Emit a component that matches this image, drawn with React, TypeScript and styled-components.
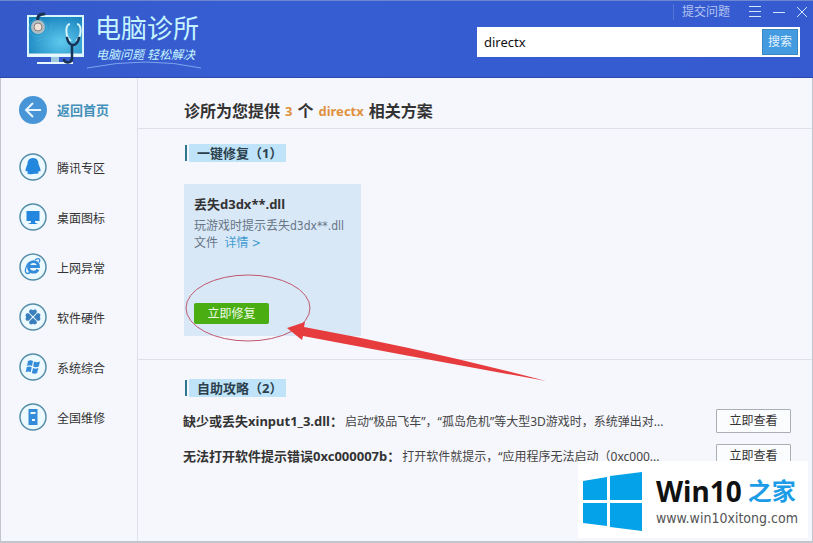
import React from "react";
import styled, { createGlobalStyle } from "styled-components";

const GlobalStyle = createGlobalStyle`
  * { box-sizing: border-box; }
  body {
    margin: 0;
    background: #f6f7fd;
    color: #333;
    font: 12px/16px "Noto Sans", "Noto Sans CJK SC", sans-serif;
  }
  button, input { font: inherit; }
  button { cursor: pointer; }
  h1, h2, h3, p, ul { margin: 0; padding: 0; }
  ul { list-style: none; }
  svg { flex-shrink: 0; }
`;

const Window = styled.div`
  position: relative;
  display: flex;
  flex-direction: column;
  min-height: 100vh;
  border: 1px solid #c3c5cd;
  border-top: 0;
  border-bottom-width: 2px;
`;

const Header = styled.header`
  display: flex;
  justify-content: space-between;
  height: 78px;
  margin: 0 -1px;
  background: linear-gradient(90deg, #3559c9, #365dd2 30%, #365bd1);
  border-top: 1px solid #6d87cf;
  border-bottom: 1px solid #2c4aa5;
`;

const Brand = styled.div`
  display: flex;
  gap: 8px;
  padding: 10px 0 0 26px;
`;

const BrandText = styled.div`
  color: #c5f4ff;
`;

const BrandName = styled.div`
  font-size: 26px;
  line-height: 32px;
  padding: 1px 0 0 1px;
  white-space: nowrap;
`;

const Slogan = styled.div`
  padding: 4px 0 0 2px;
  font-size: 12px;
  line-height: 14px;
  font-style: italic;
  white-space: nowrap;
`;

const Swoosh = styled.svg`
  display: block;
  margin: -1px 0 0 -7px;
`;

const Tools = styled.div`
  display: flex;
  flex: 0 1 336px;
  flex-direction: column;
  gap: 4px;
  padding-right: 13px;
`;

const WindowControls = styled.nav`
  display: flex;
  align-items: center;
  justify-content: flex-end;
  gap: 10px;
  height: 22px;
  margin-right: -8px;
`;

const Feedback = styled.a`
  margin-right: 8px;
  padding-left: 8px;
  border-left: 1px solid #5674d6;
  color: #b3c3f0;
  text-decoration: none;
`;

const ControlButton = styled.button`
  display: flex;
  padding: 0;
  border: 0;
  background: none;
`;

const SearchForm = styled.form`
  display: flex;
  height: 30px;
  padding: 2px;
  background: #fff;
`;

const SearchInput = styled.input`
  flex: 1;
  min-width: 0;
  padding: 0 5px;
  border: 0;
  outline: 0;
  background: none;
  color: #111;
  font-size: 13px;
`;

const SearchButton = styled.button`
  width: 36px;
  padding: 0;
  border: 1px solid #3b86c0;
  background: #449be0;
  color: #e2f3ff;
`;

const Body = styled.div`
  display: flex;
  flex: 1;
`;

const Sidebar = styled.nav`
  flex: 0 0 137px;
  padding: 18px 0 0 18px;
  border-right: 1px solid #dfe1e8;
`;

const NavLink = styled.a<{ $home?: boolean }>`
  display: flex;
  align-items: center;
  gap: 10px;
  height: 28px;
  margin-bottom: ${(p) => (p.$home ? 29 : 22)}px;
  color: ${(p) => (p.$home ? "#4290b8" : "#333")};
  font-size: ${(p) => (p.$home ? 13 : 12)}px;
  font-weight: ${(p) => (p.$home ? 700 : 400)};
  text-decoration: none;
`;

const NavText = styled.span`
  padding-top: 3px;
`;

const Main = styled.main`
  flex: 1;
  min-width: 0;
`;

const Title = styled.h1`
  display: flex;
  align-items: center;
  gap: 5px;
  height: 51px;
  padding: 16px 0 0 46px;
  line-height: 20px;
  font-size: 16px;
  border-bottom: 1px solid #dfe1e8;
  white-space: nowrap;
`;

const Accent = styled.span`
  color: #e0913c;
  font-size: 13px;
`;

const Section = styled.section<{ $divided?: boolean }>`
  padding: ${(p) => (p.$divided ? "15px 21px 23px 46px" : "19px 21px 23px 46px")};
  border-bottom: ${(p) => (p.$divided ? "1px solid #dfe1e8" : "0")};
`;

const SectionTitle = styled.h2`
  display: flex;
  gap: 2px;
  width: max-content;
  margin-left: 1px;
  font-size: 13px;
  line-height: 18px;
  color: #2b3f4d;

  &::before {
    content: "";
    width: 2px;
    margin: 1px 0;
    background: #2c7890;
  }
`;

const SectionLabel = styled.span`
  padding: 0 4px 0 8px;
  background: #bfe4f9;
`;

const Card = styled.article`
  position: relative;
  display: flex;
  flex-direction: column;
  align-items: flex-start;
  width: 177px;
  height: 152px;
  margin-top: 22px;
  padding: 10px 10px 12px;
  background: #d9e8f7;
`;

const CardTitle = styled.h3`
  font-size: 13px;
  line-height: 20px;
`;

const CardText = styled.p`
  margin-top: 4px;
  color: #667585;
  font-family: "DejaVu Sans Condensed", "Noto Sans CJK SC", sans-serif;
  line-height: 17px;
`;

const DetailLink = styled.a`
  margin-left: 3px;
  color: #419bd0;
  text-decoration: none;
`;

const FixButton = styled.button`
  width: 75px;
  height: 21px;
  margin-top: auto;
  padding: 0;
  border: 0;
  border-radius: 2px;
  background: #4aad12;
  color: #effbe6;
`;

const Annotation = styled.svg`
  position: absolute;
  left: 0;
  top: 88px;
  z-index: 1;
  pointer-events: none;
`;

const Guides = styled.ul`
  display: grid;
  gap: 11px;
  margin: 12px 0 0 -1px;
`;

const Guide = styled.li`
  display: flex;
  align-items: center;
  gap: 2px;
  height: 24px;
  white-space: nowrap;
`;

const GuideName = styled.h3`
  font-size: 13px;
  line-height: 18px;
`;

const GuideText = styled.p`
  flex: 1;
  padding-top: 1px;
  color: #444;
`;

const ViewButton = styled.button`
  flex: 0 0 75px;
  height: 24px;
  padding: 0;
  border: 1px solid #aaaeb5;
  border-radius: 1px;
  background: #fbfcfe;
  color: #333;
`;

const Watermark = styled.aside`
  position: absolute;
  right: 4px;
  bottom: 3px;
  z-index: 2;
  display: flex;
  gap: 13px;
  width: 230px;
  height: 77px;
  padding: 11px 0 0 5px;
  background: #fff;
`;

const SiteName = styled.div`
  display: flex;
  gap: 6px;
  padding-top: 3px;
  color: #111;
  font-size: 28px;
  font-weight: 700;
  line-height: 32px;
  white-space: nowrap;
`;

const SiteSuffix = styled.span`
  color: #1c9ce6;
  font-size: 24px;
`;

const SiteUrl = styled.div`
  padding-top: 2px;
  color: #555;
  font-family: "DejaVu Sans Condensed", "Noto Sans", sans-serif;
  font-size: 14px;
  line-height: 18px;
`;

const blue = "#338bd9";

const LogoIcon = () => (
  <svg width="60" height="56" viewBox="0 0 60 56" fill="none" aria-hidden="true">
    <defs>
      <radialGradient id="screen" cx="0.6" cy="0.65" r="0.7">
        <stop offset="0" stopColor="#5fc9ee" />
        <stop offset="1" stopColor="#1783bd" />
      </radialGradient>
    </defs>
    <path d="M25 45h8v6h-8z" fill="#9dc8de" />
    <path d="M11 51h36v2H11z" fill="#e8f6fd" />
    <rect x="2" y="5" width="55" height="40" fill="url(#screen)" stroke="#d8f5fe" strokeWidth="2" />
    <path d="M3 44h53" stroke="#e8f6fd" strokeWidth="3" />
    <g stroke="#4db3dc" strokeOpacity="0.5">
      <circle cx="12" cy="17" r="9" />
      <path d="M25 12q2 14-14 18" />
    </g>
    <path d="M12 12c-1-6 0-9 6-9" stroke="#173254" strokeWidth="3" strokeLinecap="round" />
    <circle cx="12" cy="16" r="7" fill="#b1bdc3" />
    <circle cx="12" cy="16" r="4" fill="#eee1d8" stroke="#8a817c" />
    <path d="M44 13c-5 0-5 13 1 17m6-17c5 0 5 13-1 17" stroke="#d4f3fb" strokeWidth="2" />
    <path d="M41 27c1 4 3 7 6 7s5-3 6-7M46 35v12c0 5-6 6-8 2" stroke="#173254" strokeWidth="2.5" strokeLinecap="round" />
  </svg>
);

const BackIcon = () => (
  <svg width="28" height="28" viewBox="0 0 28 28" fill="none" aria-hidden="true">
    <circle cx="14" cy="14" r="14" fill="#4795d7" />
    <path d="M14 7l-7 7 7 7M7 14h15" stroke="#e8f7ff" strokeWidth="2" />
  </svg>
);

const Ring = ({ children }: { children: React.ReactNode }) => (
  <svg width="28" height="28" viewBox="0 0 28 28" fill="none" aria-hidden="true">
    <circle cx="14" cy="14" r="13" fill="#ecf9fe" stroke="#568ea9" strokeWidth="1.5" />
    {children}
  </svg>
);

const links = [
  {
    label: "腾讯专区",
    icon: (
      <path
        d="M14 5c-4 0-5.500 3-5.500 6L7 15c-1 3-.5 4 1 3l1 1c-2 2 1 2.500 5 2s7 0 5-2l1-1c1.500 1 2 0 1-3l-1.500-4c0-3-1.500-6-5.500-6z"
        fill="#2487de"
      />
    ),
  },
  {
    label: "桌面图标",
    icon: <path d="M7.500 8h13v10H16v1.500l3 1.500H9l3-1.500V18H7.500z" fill="#2487de" />,
  },
  {
    label: "上网异常",
    icon: (
      <>
        <path d="M10 13.500h9.500c0-6.500-10-6.500-10 .5 0 6 7.500 6.500 9.500 2.500" stroke={blue} strokeWidth="2.800" />
        <path d="M16 7c4-2.500 6-1 4 2.500M10 9.500c-4 4-5 11-1.500 11 1.500 0 3-1 4-2" stroke={blue} strokeWidth="1.300" />
      </>
    ),
  },
  {
    label: "软件硬件",
    icon: (
      <g fill="#397fbd">
        {[0, 90, 180, 270].map((angle) => (
          <path
            key={angle}
            d="M14 13.200L10.600 10C9 7.500 12 5.500 14 7.300 16 5.500 19 7.500 17.400 10z"
            transform={`rotate(${angle} 14 14)`}
          />
        ))}
      </g>
    ),
  },
  {
    label: "系统综合",
    icon: (
      <path
        d="M9 8q2.500-1.500 5 0l-1 5q-2.500-1.500-5 0zM15 8.500q3 1.500 6 0l-1.300 5q-2.700 1.500-5.500 0zM7.700 14.300q2.500-1.500 5 0l-1 5q-2.500-1.500-5 0zM14 15q2.500 1.300 5.400 0l-1.300 5q-2.600 1.300-5.200 0z"
        fill={blue}
      />
    ),
  },
  {
    label: "全国维修",
    icon: <path fillRule="evenodd" d="M9.500 6h9v16h-9zM11.500 9v2h5V9zM13 16v2h3v-2z" fill={blue} />,
  },
];

const guides = [
  {
    name: "缺少或丢失xinput1_3.dll：",
    text: "启动“极品飞车”，“孤岛危机”等大型3D游戏时，系统弹出对...",
  },
  {
    name: "无法打开软件提示错误0xc000007b：",
    text: "打开软件就提示，“应用程序无法启动（0xc000...",
  },
];

export default function App() {
  return (
    <Window lang="zh-CN">
      <GlobalStyle />
      <Header>
        <Brand>
          <LogoIcon />
          <BrandText>
            <BrandName>电脑诊所</BrandName>
            <Slogan>电脑问题 轻松解决</Slogan>
            <Swoosh width="114" height="8" viewBox="0 0 114 8" fill="none" aria-hidden="true">
              <path d="M0 7Q60-5 114 7" stroke="#7fa5ef" />
            </Swoosh>
          </BrandText>
        </Brand>
        <Tools>
          <WindowControls aria-label="窗口">
            <Feedback href="#feedback">提交问题</Feedback>
            <ControlButton aria-label="菜单">
              <svg width="14" height="12" stroke="#d3e7fa">
                <path d="M1 .5h12M1 5.500h12M1 10.500h12" />
              </svg>
            </ControlButton>
            <ControlButton aria-label="最小化">
              <svg width="14" height="12" stroke="#d3e7fa">
                <path d="M1 6.500h12" />
              </svg>
            </ControlButton>
            <ControlButton aria-label="关闭">
              <svg width="12" height="12" stroke="#d3e7fa">
                <path d="M1 1l10 10M11 1L1 11" />
              </svg>
            </ControlButton>
          </WindowControls>
          <SearchForm onSubmit={(e) => e.preventDefault()}>
            <SearchInput aria-label="搜索" defaultValue="directx" />
            <SearchButton type="submit">搜索</SearchButton>
          </SearchForm>
        </Tools>
      </Header>
      <Body>
        <Sidebar>
          <NavLink $home href="#home">
            <BackIcon />
            返回首页
          </NavLink>
          {links.map((link) => (
            <NavLink key={link.label} href="#topic">
              <Ring>{link.icon}</Ring>
              <NavText>{link.label}</NavText>
            </NavLink>
          ))}
        </Sidebar>
        <Main>
          <Title>
            诊所为您提供 <Accent>3</Accent> 个 <Accent>directx</Accent> 相关方案
          </Title>
          <Section $divided>
            <SectionTitle>
              <SectionLabel>一键修复（1）</SectionLabel>
            </SectionTitle>
            <Card>
              <CardTitle>丢失d3dx**.dll</CardTitle>
              <CardText>
                玩游戏时提示丢失d3dx**.dll文件 <DetailLink href="#detail">详情 &gt;</DetailLink>
              </CardText>
              <FixButton>立即修复</FixButton>
              <Annotation width="364" height="112" viewBox="0 0 364 112" aria-hidden="true">
                <ellipse cx="64" cy="36" rx="62" ry="33" fill="none" stroke="#c0576d" />
                <path d="M103 56l18-6-1 5q120 22 242 54-122-22-243-45l-1 4z" fill="#e63c3e" />
              </Annotation>
            </Card>
          </Section>
          <Section>
            <SectionTitle>
              <SectionLabel>自助攻略（2）</SectionLabel>
            </SectionTitle>
            <Guides>
              {guides.map((guide) => (
                <Guide key={guide.name}>
                  <GuideName>{guide.name}</GuideName>
                  <GuideText>{guide.text}</GuideText>
                  <ViewButton>立即查看</ViewButton>
                </Guide>
              ))}
            </Guides>
          </Section>
        </Main>
      </Body>
      <Watermark>
        <svg width="60" height="60" viewBox="0 0 60 60" fill="#04a2e8" aria-hidden="true">
          <path d="M0 9l24-4v23H0zM27 4l32-4v28H27zM0 31h24v23L0 51zM27 31h32v28l-32-4z" />
        </svg>
        <div>
          <SiteName>
            Win10 <SiteSuffix>之家</SiteSuffix>
          </SiteName>
          <SiteUrl>www.win10xitong.com</SiteUrl>
        </div>
      </Watermark>
    </Window>
  );
}
